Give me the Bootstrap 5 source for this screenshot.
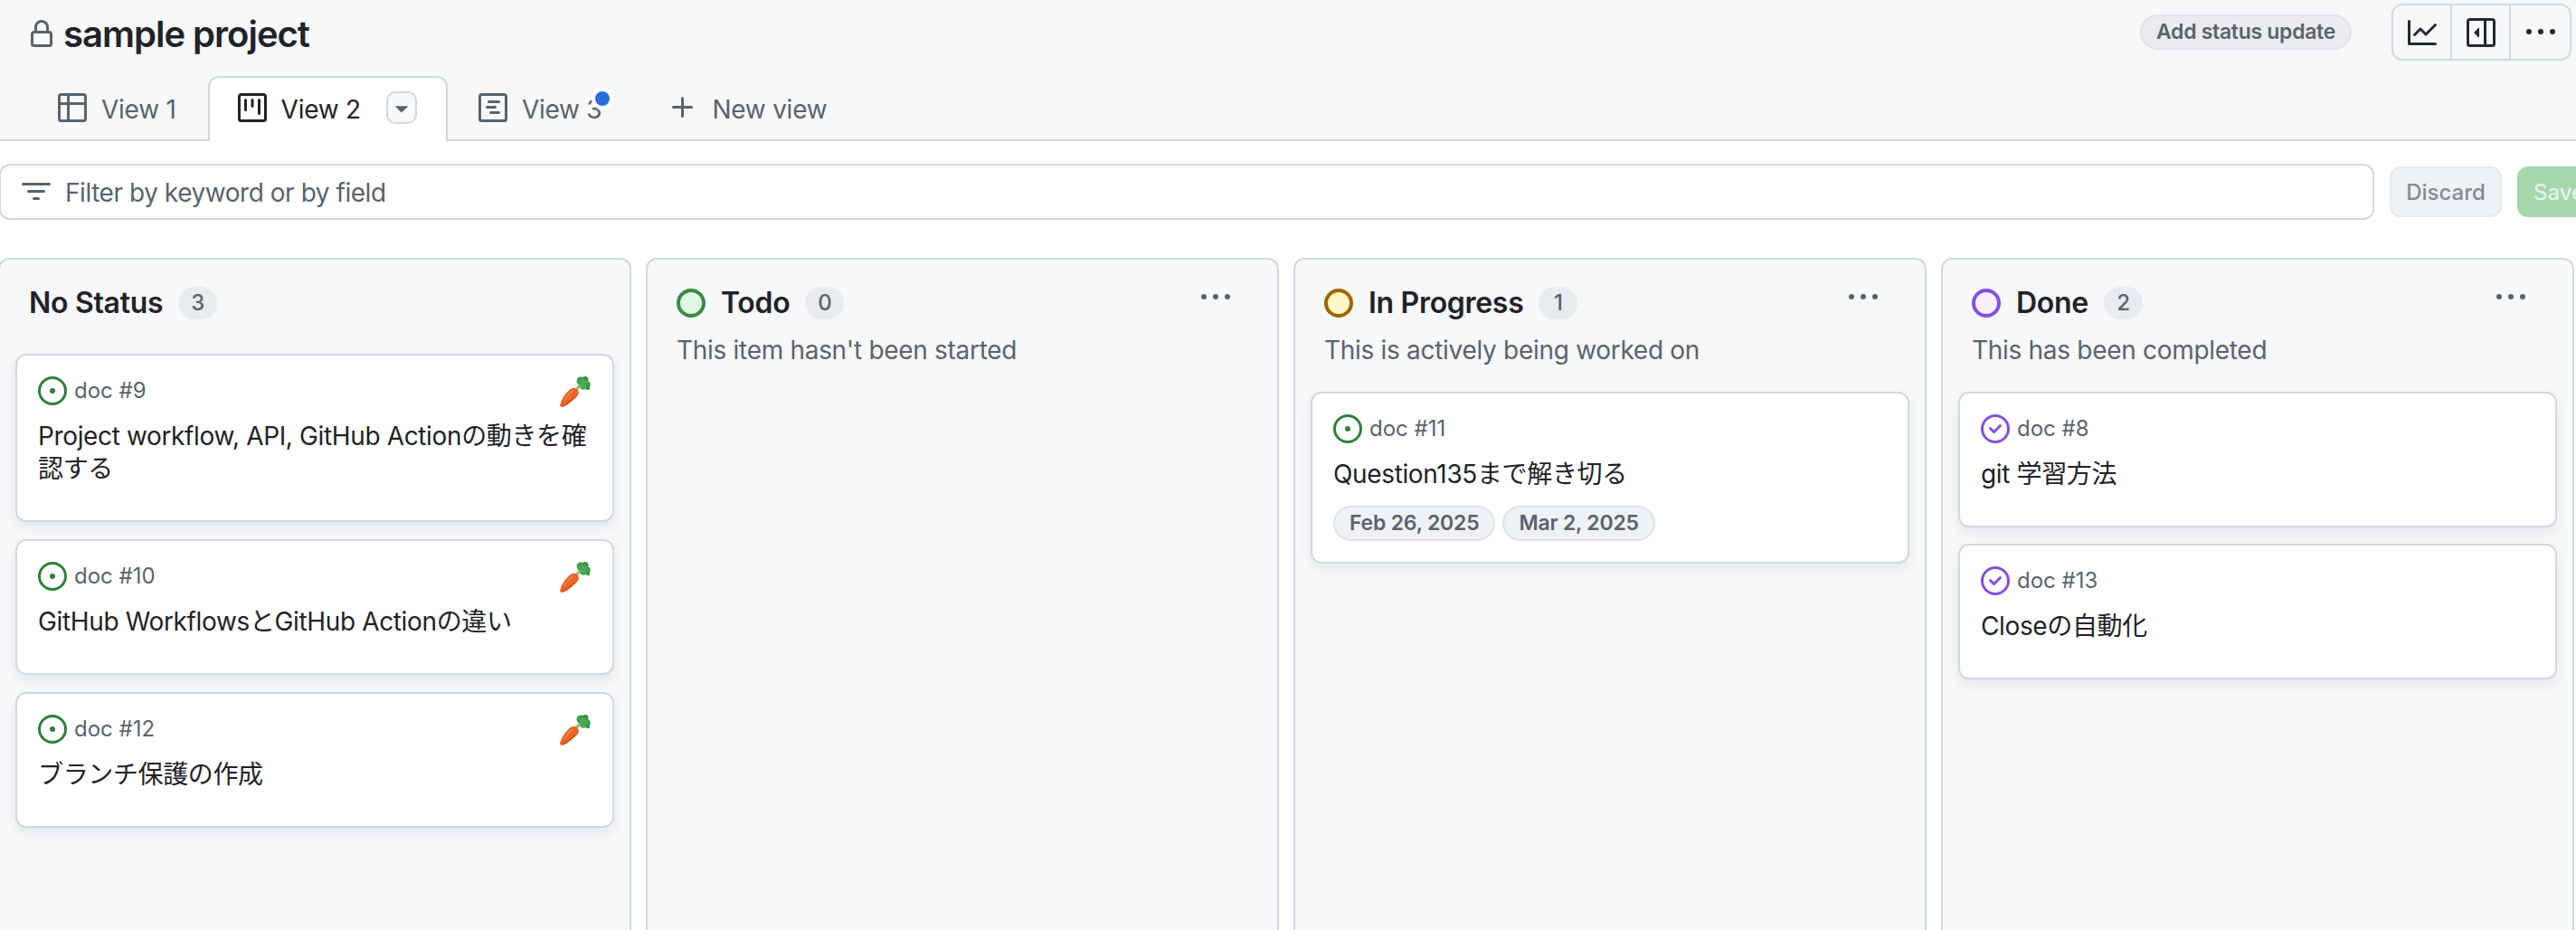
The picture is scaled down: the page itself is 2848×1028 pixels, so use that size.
<!DOCTYPE html>
<html lang="en">
<head>
<meta charset="UTF-8" />
<title>sample project</title>
<link href="https://cdn.jsdelivr.net/npm/bootstrap@5.3.3/dist/css/bootstrap.min.css" rel="stylesheet">
<style>
  html, body { height: 100%; }
  body { background: #fff; color: #1f2328; font-family: Inter, "Noto Sans CJK JP", sans-serif; font-size: 28px; overflow: hidden; letter-spacing: -0.25px; }
  svg { fill: currentColor; flex: none; display: block; }
  .i32 { width: 32px; height: 32px; }

  .top-area { background: #f6f8fa; border-bottom: 2px solid #d1d9e0; height: 156px; }
  .title-row { height: 84px; padding: 0 5px 0 30px; }
  .lock-ic { color: #59636e; margin-right: 8px; margin-top: -8px; }
  .proj-name { font-size: 40px; font-weight: 600; line-height: 1; letter-spacing: -1px; margin: -8px 0 0; }
  .status-btn { height: 39px; padding: 0 16px; margin: -13px 44px 0 0; background: #eaecef; border: 2px solid #dfe3e8; border-radius: 20px; color: #59636e; font-size: 23px; font-weight: 600; line-height: 1; letter-spacing: -0.3px; }
  .tool-group { height: 63px; border: 2px solid #d1d9e0; border-radius: 12px; margin-top: -13px; }
  .tool-btn { width: 65px; height: 100%; border-right: 2px solid #d1d9e0; color: #25292e; }
  .tool-btn:last-child { border-right: 0; }

  .tabs-row { height: 70px; }
  .tab-item { height: 70px; padding: 0 32px; gap: 16px; color: #59636e; }
  .tab-item span { padding-top: 3px; }
  .tab-item.is-active { color: #1f2328; background: #fff; border: 2px solid #d1d9e0; border-bottom: 0; border-radius: 12px 12px 0 0; height: 72px; padding: 0 32px 4px 31px; position: relative; z-index: 1; }
  .tab-first { padding-left: 64px; padding-right: 35px; }
  .tab-caret { width: 34px; height: 36px; margin-left: 12px; background: #f6f8fa; border: 2px solid #d1d9e0; border-radius: 10px; color: #59636e; }
  .tab-caret svg { width: 30px; height: 30px; }
  .tab-new { padding-left: 42px; gap: 16px; }
  .tab-unsaved { padding-left: 34px; }
  .unsaved-label { position: relative; }
  .unsaved-dot { position: absolute; width: 24px; height: 24px; top: 0; right: -13px; padding: 0; background: #2c6bdc; border: 4px solid #fff; border-radius: 50%; }

  .filter-row { height: 87px; padding-top: 25px; gap: 17px; margin-bottom: 42px; }
  .filter-box { width: 2626px; flex: none; height: 62px; margin-left: -1px; border: 2px solid #d1d9e0; border-radius: 12px; padding-left: 23px; gap: 16px; color: #59636e; letter-spacing: -0.45px; }
  .filter-box span { padding-top: 2px; }
  .filter-btn { flex: none; height: 56px; margin-top: 3px; padding-top: 2px; border-radius: 12px; font-size: 24px; font-weight: 500; letter-spacing: 0; }
  .btn-discard { width: 124px; background: #eff2f5; border: 2px solid #e6eaef; color: #818b98; }
  .btn-save { width: 120px; background: #a6d6ac; color: #e6f3e8; padding-left: 18px; }

  .board-wrap { gap: 16px; margin-left: -2px; }
  .board-col { width: 700px; flex: none; height: 743px; background: #f6f8fa; border: 2px solid #d1d9e0; border-bottom: 0; border-radius: 12px 12px 0 0; padding: 0 17px; }
  .col-head { height: 56px; margin-top: 20px; gap: 17px; padding-left: 15px; position: relative; }
  .col-name { font-size: 32px; font-weight: 600; line-height: 1; letter-spacing: -0.3px; }
  .col-count { min-width: 43px; height: 36px; padding: 0 12px; background: #e8ebef; color: #59636e; border-radius: 18px; font-size: 24px; font-weight: 500; }
  .status-dot { width: 32px; height: 32px; border-radius: 50%; border: 4px solid; flex: none; }
  .dot-green { border-color: #3a8a45; background: #e0f9e4; }
  .dot-yellow { border-color: #9a6700; background: #fff8c5; }
  .dot-purple { border-color: #8250df; background: #fbefff; }
  .col-more { position: absolute; right: 35px; top: 6px; color: #59636e; }
  .col-desc { color: #59636e; padding-left: 15px; margin: 6px 0 0; height: 46px; line-height: 36px; letter-spacing: -0.3px; }
  .col-stack { gap: 18px; margin-top: 18px; }
  .col-stack.no-desc { margin-top: 28px; gap: 19px; }

  .issue-card { background: #fff; border: 2px solid #d1d9e0; border-radius: 12px; padding: 23px 24px 0 23px; box-shadow: 0 6px 14px rgba(37, 41, 46, .08); }
  .issue-meta { gap: 8px; height: 32px; color: #59636e; font-size: 24px; letter-spacing: 0; }
  .issue-open { color: #2f7f3b; }
  .issue-closed { color: #8250df; }
  .issue-title { margin: 16px 0 0; line-height: 36px; letter-spacing: -0.36px; padding-bottom: 39px; }
  .carrot-ic { margin-left: auto; width: 36px; height: 36px; }
  .date-list { gap: 8px; margin-top: -22px; padding-bottom: 23px; }
  .date-pill { height: 39px; padding: 0 16px; background: #eff2f5; border: 2px solid #dfe3e8; border-radius: 20px; color: #59636e; font-size: 23px; font-weight: 600; letter-spacing: -0.2px; }
</style>
</head>
<body>

<svg width="0" height="0" class="position-absolute">
  <defs>
    <symbol id="ic-open" viewBox="0 0 16 16"><path d="M8 9.5a1.5 1.5 0 1 0 0-3 1.5 1.5 0 0 0 0 3Z"/><path d="M8 0a8 8 0 1 1 0 16A8 8 0 0 1 8 0ZM1.5 8a6.5 6.5 0 1 0 13 0 6.5 6.5 0 0 0-13 0Z"/></symbol>
    <symbol id="ic-closed" viewBox="0 0 16 16"><path d="M11.28 6.78a.75.75 0 0 0-1.06-1.06L7.25 8.69 5.78 7.22a.75.75 0 0 0-1.06 1.06l2 2a.75.75 0 0 0 1.06 0l3.5-3.5Z"/><path d="M16 8A8 8 0 1 1 0 8a8 8 0 0 1 16 0Zm-1.5 0a6.5 6.5 0 1 0-13 0 6.5 6.5 0 0 0 13 0Z"/></symbol>
    <symbol id="ic-more" viewBox="0 0 16 16"><path d="M8 9a1.5 1.5 0 1 0 0-3 1.5 1.5 0 0 0 0 3ZM1.5 9a1.5 1.5 0 1 0 0-3 1.5 1.5 0 0 0 0 3Zm13 0a1.5 1.5 0 1 0 0-3 1.5 1.5 0 0 0 0 3Z"/></symbol>
    <symbol id="ic-carrot" viewBox="0 0 36 36">
      <path fill="#9cc27a" d="M19 15.500l4-5 3 2.500-4.500 5Z"/>
      <g transform="translate(-1 0) rotate(-7 20 18)">
        <path fill="#e9642a" d="M1.500 31C4 25 10 18 16 15c3-1.500 7 1 7.500 4.500.5 2.500-1.500 4.500-3.500 6-5 3.500-11 7.500-15.500 8.500-2 .5-3.700-1-3-3Z"/>
        <path fill="#f28a3f" d="M6 27c3-4 7-8 11-10l1 1c-4 2-8 6-11 10Z"/>
        <path fill="#c94d1b" d="M4 32c4-1 9-4 14-8l1 1c-5 4-10 7-14 8Z"/>
      </g>
      <circle cx="25" cy="7" r="4.500" fill="#3f9f4a"/>
      <circle cx="30" cy="5.500" r="3.500" fill="#37933f"/>
      <circle cx="32" cy="11" r="3.800" fill="#3f9f4a"/>
      <circle cx="28" cy="13" r="3.800" fill="#4aa955"/>
      <circle cx="28" cy="9" r="4" fill="#4aa955"/>
      <circle cx="33" cy="15" r="2.200" fill="#37933f"/>
    </symbol>
  </defs>
</svg>

<header class="top-area">
  <div class="title-row d-flex align-items-center">
    <svg class="i32 lock-ic" viewBox="0 0 16 16"><path d="M4 4a4 4 0 0 1 8 0v2h.25c.966 0 1.750.784 1.750 1.750v5.500A1.750 1.750 0 0 1 12.250 15h-8.500A1.750 1.750 0 0 1 2 13.250v-5.500C2 6.784 2.784 6 3.750 6H4Zm8.250 3.500h-8.500a.25.25 0 0 0-.25.25v5.500c0 .138.112.25.25.25h8.500a.25.25 0 0 0 .25-.25v-5.500a.25.25 0 0 0-.25-.25ZM10.500 6V4a2.500 2.500 0 1 0-5 0v2Z"/></svg>
    <h1 class="proj-name">sample project</h1>
    <div class="ms-auto d-flex align-items-center">
      <div class="status-btn d-flex align-items-center">Add status update</div>
      <div class="tool-group d-flex">
        <div class="tool-btn d-flex align-items-center justify-content-center"><svg class="i32" viewBox="0 0 16 16"><path d="M1.500 1.750V13.500h13.750a.75.75 0 0 1 0 1.500H.75a.75.75 0 0 1-.75-.75V1.750a.75.75 0 0 1 1.500 0Zm14.280 2.530-5.250 5.250a.75.75 0 0 1-1.060 0L7 7.060 4.280 9.780a.751.751 0 0 1-1.042-.018.751.751 0 0 1-.018-1.042l3.250-3.250a.75.75 0 0 1 1.060 0L10 7.940l4.720-4.720a.751.751 0 0 1 1.042.018.751.751 0 0 1 .018 1.042Z"/></svg></div>
        <div class="tool-btn d-flex align-items-center justify-content-center"><svg class="i32" viewBox="0 0 16 16"><path d="m4.177 7.823 2.396-2.396A.25.25 0 0 1 7 5.604v4.792a.25.25 0 0 1-.427.177L4.177 8.177a.25.25 0 0 1 0-.354Z"/><path d="M0 1.750C0 .784.784 0 1.750 0h12.500C15.216 0 16 .784 16 1.750v12.500A1.750 1.750 0 0 1 14.250 16H1.750A1.750 1.750 0 0 1 0 14.250Zm1.750-.25a.25.25 0 0 0-.25.25v12.500c0 .138.112.25.25.25H9.500v-13Zm12.500 13a.25.25 0 0 0 .25-.25V1.750a.25.25 0 0 0-.25-.25H11v13Z"/></svg></div>
        <div class="tool-btn d-flex align-items-center justify-content-center"><svg class="i32"><use href="#ic-more"/></svg></div>
      </div>
    </div>
  </div>
  <div class="tabs-row d-flex">
    <div class="tab-item tab-first d-flex align-items-center">
      <svg class="i32" viewBox="0 0 16 16"><path d="M0 1.750C0 .784.784 0 1.750 0h12.500C15.216 0 16 .784 16 1.750v12.500A1.750 1.750 0 0 1 14.250 16H1.750A1.750 1.750 0 0 1 0 14.250ZM6.500 6.500v8h7.750a.25.25 0 0 0 .25-.25V6.500Zm8-1.500V1.750a.25.25 0 0 0-.25-.25H6.500V5Zm-13 1.500v7.750c0 .138.112.25.25.25H5v-8ZM5 5V1.500H1.750a.25.25 0 0 0-.25.25V5Z"/></svg>
      <span>View 1</span>
    </div>
    <div class="tab-item is-active d-flex align-items-center">
      <svg class="i32" viewBox="0 0 16 16"><path d="M1.750 0h12.500C15.216 0 16 .784 16 1.750v12.500A1.750 1.750 0 0 1 14.250 16H1.750A1.750 1.750 0 0 1 0 14.250V1.750C0 .784.784 0 1.750 0ZM1.500 1.750v12.500c0 .138.112.25.25.25h12.500a.25.25 0 0 0 .25-.25V1.750a.25.25 0 0 0-.25-.25H1.750a.25.25 0 0 0-.25.25ZM11.750 3a.75.75 0 0 1 .75.75v7.500a.75.75 0 0 1-1.500 0v-7.500a.75.75 0 0 1 .75-.75Zm-8.250.75a.75.75 0 0 1 1.500 0v5.500a.75.75 0 0 1-1.500 0ZM8 3a.75.75 0 0 1 .75.75v3.500a.75.75 0 0 1-1.500 0v-3.500A.75.75 0 0 1 8 3Z"/></svg>
      <span>View 2</span>
      <div class="tab-caret d-flex align-items-center justify-content-center"><svg viewBox="0 0 16 16"><path d="m4.427 7.427 3.396 3.396a.25.25 0 0 0 .354 0l3.396-3.396A.25.25 0 0 0 11.396 7H4.604a.25.25 0 0 0-.177.427Z"/></svg></div>
    </div>
    <div class="tab-item tab-unsaved d-flex align-items-center">
      <svg class="i32" viewBox="0 0 16 16"><path d="M4.750 7a.75.75 0 0 0 0 1.500h4.500a.75.75 0 0 0 0-1.500h-4.500ZM5 4.750A.75.75 0 0 1 5.750 4h5.500a.75.75 0 0 1 0 1.500h-5.500A.75.75 0 0 1 5 4.750ZM6.750 10a.75.75 0 0 0 0 1.500h4.500a.75.75 0 0 0 0-1.500h-4.500Z"/><path d="M0 1.750C0 .784.784 0 1.750 0h12.500C15.216 0 16 .784 16 1.750v12.500A1.750 1.750 0 0 1 14.250 16H1.750A1.750 1.750 0 0 1 0 14.250Zm1.750-.25a.25.25 0 0 0-.25.25v12.500c0 .138.112.25.25.25h12.500a.25.25 0 0 0 .25-.25V1.750a.25.25 0 0 0-.25-.25Z"/></svg>
      <span class="unsaved-label">View 3<span class="unsaved-dot"></span></span>
    </div>
    <div class="tab-item tab-new d-flex align-items-center">
      <svg class="i32" viewBox="0 0 16 16"><path d="M7.750 2a.75.75 0 0 1 .75.75V7h4.250a.75.75 0 0 1 0 1.500H8.500v4.250a.75.75 0 0 1-1.500 0V8.500H2.750a.75.75 0 0 1 0-1.500H7V2.750A.75.75 0 0 1 7.750 2Z"/></svg>
      <span>New view</span>
    </div>
  </div>
</header>

<div class="filter-row d-flex">
  <div class="filter-box d-flex align-items-center">
    <svg class="i32" viewBox="0 0 16 16"><path d="M.75 3h14.500a.75.75 0 0 1 0 1.500H.75a.75.75 0 0 1 0-1.500ZM3 7.750A.75.75 0 0 1 3.750 7h8.500a.75.75 0 0 1 0 1.500h-8.500A.75.75 0 0 1 3 7.750Zm3 4a.75.75 0 0 1 .75-.75h2.500a.75.75 0 0 1 0 1.500h-2.500a.75.75 0 0 1-.75-.75Z"/></svg>
    <span>Filter by keyword or by field</span>
  </div>
  <div class="filter-btn btn-discard d-flex align-items-center justify-content-center">Discard</div>
  <div class="filter-btn btn-save d-flex align-items-center">Save</div>
</div>

<main class="board-wrap d-flex">
  <section class="board-col">
    <div class="col-head d-flex align-items-center">
      <span class="col-name">No Status</span>
      <span class="col-count d-flex align-items-center justify-content-center">3</span>
    </div>
    <div class="col-stack no-desc d-flex flex-column">
      <article class="issue-card">
        <div class="issue-meta d-flex align-items-center"><svg class="i32 issue-open"><use href="#ic-open"/></svg><span>doc #9</span><svg class="carrot-ic"><use href="#ic-carrot"/></svg></div>
        <p class="issue-title">Project workflow, API, GitHub Actionの動きを確認する</p>
      </article>
      <article class="issue-card">
        <div class="issue-meta d-flex align-items-center"><svg class="i32 issue-open"><use href="#ic-open"/></svg><span>doc #10</span><svg class="carrot-ic"><use href="#ic-carrot"/></svg></div>
        <p class="issue-title">GitHub WorkflowsとGitHub Actionの違い</p>
      </article>
      <article class="issue-card">
        <div class="issue-meta d-flex align-items-center"><svg class="i32 issue-open"><use href="#ic-open"/></svg><span>doc #12</span><svg class="carrot-ic"><use href="#ic-carrot"/></svg></div>
        <p class="issue-title">ブランチ保護の作成</p>
      </article>
    </div>
  </section>

  <section class="board-col">
    <div class="col-head d-flex align-items-center">
      <span class="status-dot dot-green"></span>
      <span class="col-name">Todo</span>
      <span class="col-count d-flex align-items-center justify-content-center">0</span>
      <svg class="i32 col-more"><use href="#ic-more"/></svg>
    </div>
    <p class="col-desc">This item hasn't been started</p>
  </section>

  <section class="board-col">
    <div class="col-head d-flex align-items-center">
      <span class="status-dot dot-yellow"></span>
      <span class="col-name">In Progress</span>
      <span class="col-count d-flex align-items-center justify-content-center">1</span>
      <svg class="i32 col-more"><use href="#ic-more"/></svg>
    </div>
    <p class="col-desc">This is actively being worked on</p>
    <div class="col-stack d-flex flex-column">
      <article class="issue-card">
        <div class="issue-meta d-flex align-items-center"><svg class="i32 issue-open"><use href="#ic-open"/></svg><span>doc #11</span></div>
        <p class="issue-title">Question135まで解き切る</p>
        <div class="date-list d-flex">
          <span class="date-pill d-flex align-items-center">Feb 26, 2025</span>
          <span class="date-pill d-flex align-items-center">Mar 2, 2025</span>
        </div>
      </article>
    </div>
  </section>

  <section class="board-col">
    <div class="col-head d-flex align-items-center">
      <span class="status-dot dot-purple"></span>
      <span class="col-name">Done</span>
      <span class="col-count d-flex align-items-center justify-content-center">2</span>
      <svg class="i32 col-more"><use href="#ic-more"/></svg>
    </div>
    <p class="col-desc">This has been completed</p>
    <div class="col-stack d-flex flex-column">
      <article class="issue-card">
        <div class="issue-meta d-flex align-items-center"><svg class="i32 issue-closed"><use href="#ic-closed"/></svg><span>doc #8</span></div>
        <p class="issue-title">git 学習方法</p>
      </article>
      <article class="issue-card">
        <div class="issue-meta d-flex align-items-center"><svg class="i32 issue-closed"><use href="#ic-closed"/></svg><span>doc #13</span></div>
        <p class="issue-title">Closeの自動化</p>
      </article>
    </div>
  </section>
</main>

<script src="https://cdn.jsdelivr.net/npm/bootstrap@5.3.3/dist/js/bootstrap.bundle.min.js"></script>
</body>
</html>
